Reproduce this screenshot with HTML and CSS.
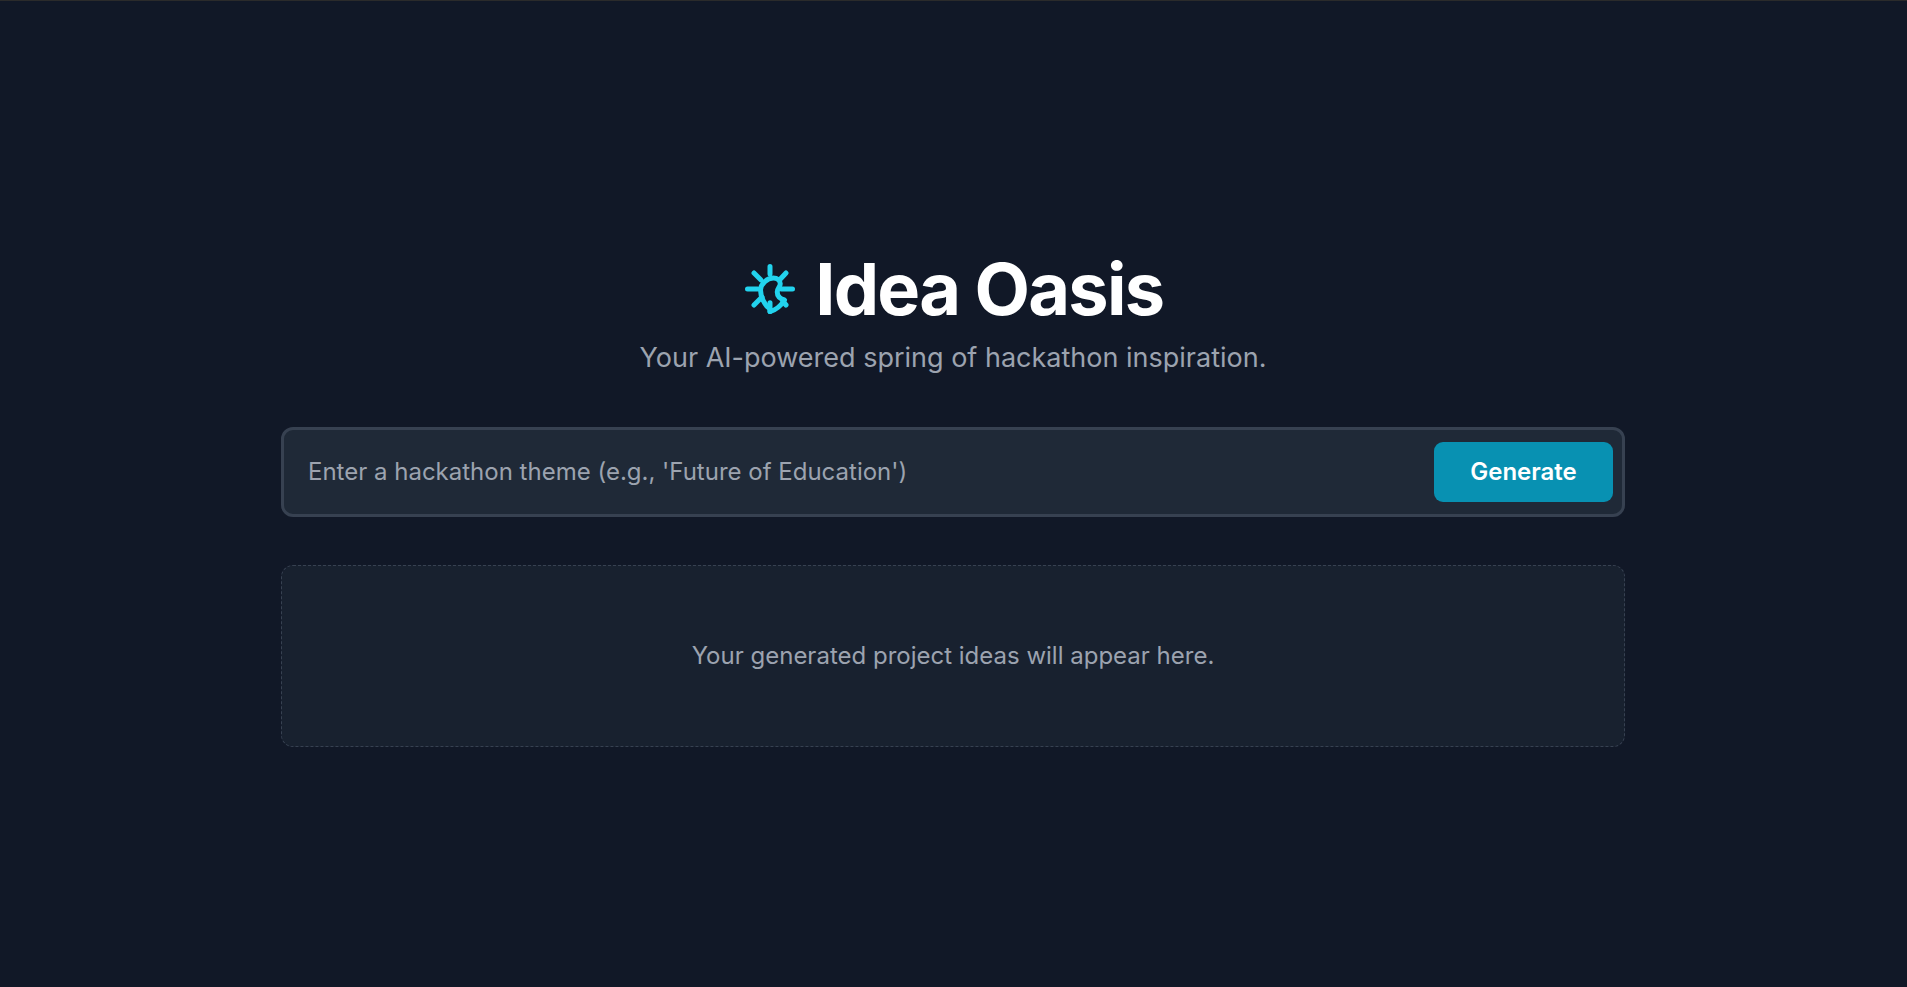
FILE: index.html
```
<!DOCTYPE html>
<html lang="en">
<head>
    <meta charset="UTF-8">
    <title>Idea Oasis</title>
    <link rel="stylesheet" href="styles.css">
</head>
<body>
    <main class="container">
        <header class="header">
            <h1 class="title">
                <svg class="logo" viewBox="0 0 24 24" fill="none" stroke="currentColor" stroke-width="2" stroke-linecap="round" stroke-linejoin="round">
                    <path d="M12 3v3M5.6 5.6l2.7 2.7M18.4 5.6l-2.7 2.9M3 12h4M21 12h-4.5M5.6 18.4l3.2-3.2M18.4 18.4L17.2 17M12 21v-3.5"/>
                    <path d="M12 21C14 20.5 16.3 18.8 17.8 16.4C16 15.9 14.9 15 14.9 13.2C14.9 11.5 16.1 11.2 16.1 9.9C16.1 8.5 14.9 7.6 13.3 7.6C11 7.6 8.3 9.8 8.2 12.4C8.2 15 9.8 18.5 12 20z"/>
                </svg>
                <span>Idea Oasis</span>
            </h1>
            <p class="subtitle">Your AI-powered spring of hackathon inspiration.</p>
        </header>

        <form class="search" onsubmit="return false">
            <input class="search-input" type="text" placeholder="Enter a hackathon theme (e.g., 'Future of Education')">
            <button class="search-button" type="submit">Generate</button>
        </form>

        <section class="results">
            <p>Your generated project ideas will appear here.</p>
        </section>
    </main>
</body>
</html>
```
FILE: styles.css
```
* {
    box-sizing: border-box;
}

body {
    margin: 0;
    padding-right: 1px;
    min-height: 100vh;
    border-top: 1px solid #2b2b2b;
    background-color: #111827;
    color: white;
    font-family: Inter, sans-serif;
    font-size: 24px;
}

h1, p {
    margin: 0;
}

.container {
    width: 1344px;
    margin: 0 auto;
    padding-top: 252px;
}

.header {
    text-align: center;
    margin-bottom: 48px;
}

.title {
    display: flex;
    align-items: center;
    justify-content: center;
    gap: 15.5px;
    padding-right: 3px;
    font-size: 72px;
    line-height: 72px;
    font-weight: 700;
    letter-spacing: -1.75px;
}

.logo {
    width: 60px;
    height: 60px;
    color: #22d3ee;
}

.subtitle {
    margin-top: 12px;
    font-size: 27px;
    line-height: 42px;
    color: #9ca3af;
}

.search {
    display: flex;
    align-items: center;
    height: 90px;
    padding: 0 9px 0 24px;
    border: 3px solid #374151;
    border-radius: 12px;
    background-color: #1f2937;
}

.search-input {
    flex: 1;
    height: 36px;
    padding: 0;
    border: none;
    outline: none;
    background: transparent;
    color: white;
    font-family: inherit;
    font-size: 24px;
    line-height: 36px;
}

.search-input::placeholder {
    color: #9ca3af;
}

.search-button {
    width: 179px;
    height: 60px;
    border: none;
    border-radius: 9px;
    background-color: #0891b2;
    color: white;
    font-family: inherit;
    font-size: 24px;
    font-weight: 600;
    line-height: 36px;
    cursor: pointer;
}

.results {
    margin-top: 48px;
    padding: 72px;
    border: 1px dashed #374151;
    border-radius: 12px;
    background-color: rgba(31, 41, 55, 0.5);
    color: #9ca3af;
    line-height: 36px;
    text-align: center;
}
```
